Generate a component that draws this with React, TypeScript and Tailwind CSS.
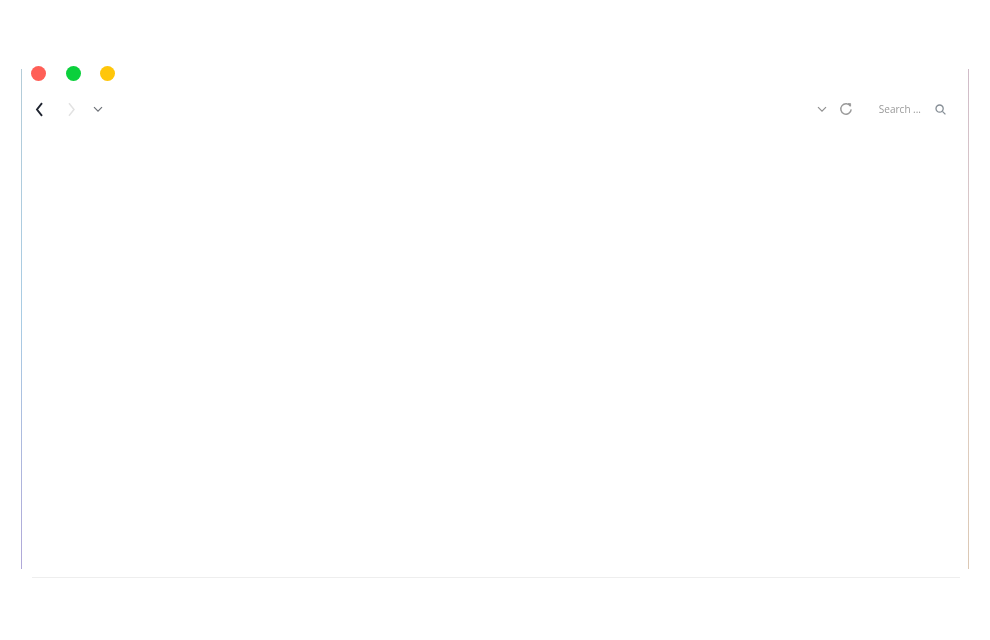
export default function App() {
  return (
    <div className="w-[990px] h-[640px] bg-white overflow-hidden pt-[69px] font-['Open_Sans',sans-serif]">
      <div className="ml-[21px] w-[948px] h-[500px] flex">
        <div className="w-px h-full bg-gradient-to-b from-[#b4ccd8] via-[#a8cce4] to-[#b0a8d8]" />
        <div className="flex-1 -mt-[3px] flex flex-col">
          <div className="flex items-center gap-[19px] pl-[9px] h-[15px] blur-[0.3px]">
            <span className="w-[15px] h-[15px] rounded-full bg-[#ff5f57]" />
            <span className="w-[15px] h-[15px] rounded-full bg-[#0bd03c] ml-[1px]" />
            <span className="w-[15px] h-[15px] rounded-full bg-[#ffc60a]" />
          </div>
          <div className="flex items-center mt-[18px] h-[20px] blur-[0.35px]">
            <svg className="ml-[13px] w-[9px] h-[15px]" viewBox="0 0 9 15" fill="none" stroke="#1f2430" strokeWidth="1.9">
              <path d="M7 1.2 L2 7.5 L7 13.8" />
            </svg>
            <svg className="ml-[23px] w-[9px] h-[15px]" viewBox="0 0 9 15" fill="none" stroke="#e2e2e2" strokeWidth="1.5">
              <path d="M2 1.2 L7 7.5 L2 13.8" />
            </svg>
            <svg className="ml-[17px] w-[10px] h-[7px]" viewBox="0 0 10 7" fill="none" stroke="#6e7278" strokeWidth="1.2">
              <path d="M1 1.2 L5 5.2 L9 1.2" />
            </svg>
            <svg className="ml-auto w-[10px] h-[7px]" viewBox="0 0 10 7" fill="none" stroke="#8f8f8f" strokeWidth="1.2">
              <path d="M1 1.2 L5 5.2 L9 1.2" />
            </svg>
            <svg className="ml-[12px] w-[14px] h-[14px]" viewBox="0 0 14 14" fill="none" stroke="#989898" strokeWidth="1.4">
              <path d="M11.4 4.2 A5.2 5.2 0 1 0 12.2 7.4" />
              <path d="M9 1.6 L11.6 1.6 L11.6 4.4" fill="#989898" strokeWidth="0.8" />
            </svg>
            <span className="ml-[26px] text-[10px] leading-none text-[#9a9a9a]">Search ...</span>
            <svg className="ml-[14px] mr-[22px] w-[11px] h-[11px]" viewBox="0 0 11 11" fill="none" stroke="#868e96" strokeWidth="1.3">
              <circle cx="4.6" cy="4.6" r="3.6" />
              <path d="M7.4 7.4 L10.4 10.4" />
            </svg>
          </div>
        </div>
        <div className="w-px h-full bg-gradient-to-b from-[#d0bcc8] via-[#e0d0c8] to-[#dcc8b4]" />
      </div>
      <div className="ml-[32px] w-[928px] h-px mt-[8px] bg-[#eeeeee]" />
    </div>
  );
}
